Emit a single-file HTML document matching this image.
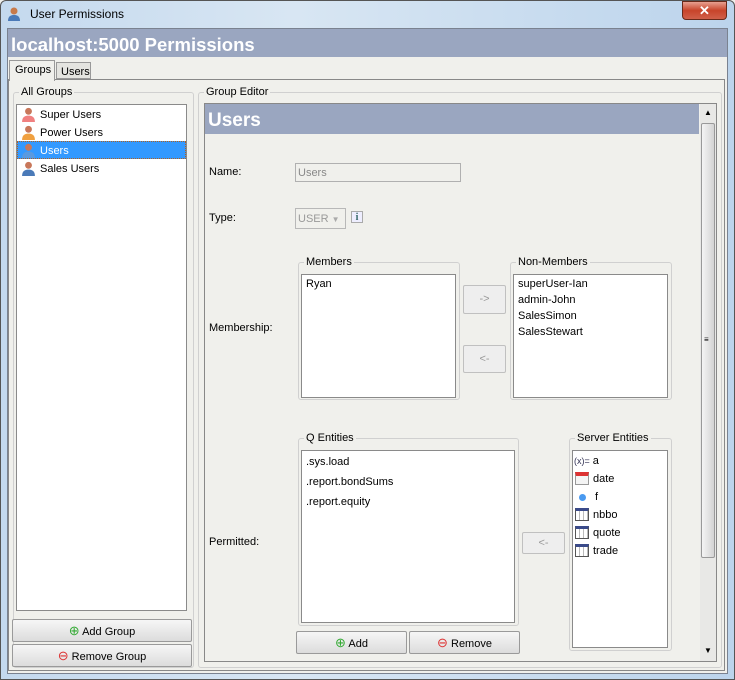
<!DOCTYPE html><html><head><style>
*{box-sizing:border-box;margin:0;padding:0}
body{width:735px;height:680px;overflow:hidden;font:11px "Liberation Sans",sans-serif;color:#000;background:#f0f0ec;position:relative}
.a{position:absolute}
.fs{position:absolute;border:1px solid #d0d0d0;border-radius:3px}
.lg{position:absolute;top:-7px;left:5px;background:#f0f0ec;padding:0 2px;font-size:11px;line-height:12px}
.lb{position:absolute;background:#fff;border:1px solid #8a8a8a}
.bt{position:absolute;border:1px solid #9a9a9a;border-radius:2px;background:linear-gradient(#f6f6f6,#dcdcdc);text-align:center;font-size:11px}
.dis{color:#999;border-color:#c0c0c0;background:#eee}
.it{position:absolute;left:4px;height:18px;line-height:18px}
.pi{display:inline-block;width:15px;height:15px;vertical-align:middle;margin-right:4px;position:relative;top:-1px}
.grd{display:inline-block;width:14px;height:13px;border:1px solid #555;border-top:3px solid #3a4a8a;background:repeating-linear-gradient(90deg,#fff 0 3px,#bbb 3px 4px),#fff;vertical-align:middle;margin-right:4px;position:relative;top:-1px}
</style></head><body>
<div class="a" style="left:0;top:0;width:735px;height:680px;border:1px solid #555;border-radius:6px 6px 0 0;background:linear-gradient(90deg,#c4d9ee,#d8e6f3 40%,#bcd4ec)"></div>
<div class="a" style="left:6px;top:6px;width:16px;height:16px"><svg width="16" height="16"><circle cx="8" cy="5" r="3.5" fill="#c77a4a"/><path d="M2 15c0-5 3-6 6-6s6 1 6 6z" fill="#4a7ab8"/></svg></div>
<div class="a" style="left:30px;top:7px;font-size:12px;color:#000">User Permissions</div>
<div class="a" style="left:682px;top:1px;width:45px;height:19px;border:1px solid #6a2a1a;border-radius:0 0 4px 4px;background:linear-gradient(#e8a090,#c8442a 50%,#d0604a);color:#fff;font-weight:bold;text-align:center;font-size:13px;line-height:17px">✕</div>
<div class="a" style="left:7px;top:28px;width:721px;height:646px;background:#f0f0ec;border:1px solid #7a8290"></div>
<div class="a" style="left:8px;top:29px;width:719px;height:28px;background:#9aa6c0;color:#fff;font-weight:bold;font-size:18.5px;line-height:31px;padding-left:3px">localhost:5000 Permissions</div>
<div class="a" style="left:8px;top:79px;width:717px;height:592px;border:1px solid #888"></div>
<div class="a" style="left:9px;top:60px;width:46px;height:21px;border:1px solid #999;border-bottom:none;background:#f0f0ec;padding:3px 0 0 5px;font-size:11px">Groups</div>
<div class="a" style="left:56px;top:62px;width:35px;height:17px;border:1px solid #999;background:#e4e4e0;padding:3px 0 0 4px">Users</div>

<div class="fs" style="left:13px;top:92px;width:181px;height:576px"><span class="lg">All Groups</span></div>
<div class="lb" style="left:16px;top:104px;width:171px;height:507px">
<div class="it" style="top:1px"><svg class="pi" viewBox="0 0 13 14"><circle cx="6.5" cy="4" r="3.2" fill="#c8775a"/><path d="M0.5 14c0-5 3-6 6-6S12.5 9 12.5 14z" fill="#f08080"/></svg>Super Users</div>
<div class="it" style="top:19px"><svg class="pi" viewBox="0 0 13 14"><circle cx="6.5" cy="4" r="3.2" fill="#c8775a"/><path d="M0.5 14c0-5 3-6 6-6S12.5 9 12.5 14z" fill="#f0a040"/></svg>Power Users</div>
<div class="a" style="left:0;top:36px;width:169px;height:18px;background:#3399ff;border:1px dotted #b06020"></div>
<div class="it" style="top:37px;color:#fff"><svg class="pi" viewBox="0 0 13 14"><circle cx="6.5" cy="4" r="3.2" fill="#c8775a"/><path d="M0.5 14c0-5 3-6 6-6S12.5 9 12.5 14z" fill="#5a9ae0"/></svg>Users</div>
<div class="it" style="top:55px"><svg class="pi" viewBox="0 0 13 14"><circle cx="6.5" cy="4" r="3.2" fill="#c8775a"/><path d="M0.5 14c0-5 3-6 6-6S12.5 9 12.5 14z" fill="#4a7ab8"/></svg>Sales Users</div>
</div>
<div class="bt" style="left:12px;top:619px;width:180px;height:23px;line-height:21px"><span style="color:#3a3;font-size:13px">⊕</span> Add Group</div>
<div class="bt" style="left:12px;top:644px;width:180px;height:23px;line-height:21px"><span style="color:#d33;font-size:13px">⊖</span> Remove Group</div>

<div class="fs" style="left:198px;top:92px;width:524px;height:576px"><span class="lg">Group Editor</span></div>
<div class="a" style="left:204px;top:103px;width:513px;height:559px;border:1px solid #888"></div>
<div class="a" style="left:205px;top:104px;width:494px;height:30px;background:#9aa6c0;color:#fff;font-weight:bold;font-size:19px;line-height:33px;padding-left:3px">Users</div>
<div class="a" style="left:700px;top:104px;width:16px;height:557px;background:#e8e8e6"></div>
<div class="a" style="left:701px;top:123px;width:14px;height:435px;border:1px solid #999;border-radius:2px;background:linear-gradient(90deg,#f4f4f4,#d4d4d4)"></div>
<div class="a" style="left:704px;top:108px;font-size:8px">▲</div>
<div class="a" style="left:704px;top:646px;font-size:8px">▼</div>
<div class="a" style="left:704px;top:335px;font-size:8px">≡</div>

<div class="a" style="left:209px;top:166px">Name:</div>
<div class="a" style="left:295px;top:163px;width:166px;height:19px;border:1px solid #b0b0b0;color:#888;padding:3px 2px">Users</div>
<div class="a" style="left:209px;top:212px">Type:</div>
<div class="a" style="left:295px;top:208px;width:51px;height:21px;border:1px solid #b8b8b8;color:#999;padding:4px 2px">USER <span style="font-size:8px;color:#aaa">▼</span></div>
<div class="a" style="left:351px;top:211px;width:12px;height:12px;border:1px solid #aaa;background:#eef;color:#366;font-weight:bold;font-size:10px;text-align:center;line-height:11px;font-family:'Liberation Serif',serif">i</div>
<div class="a" style="left:209px;top:322px">Membership:</div>
<div class="fs" style="left:298px;top:262px;width:162px;height:138px"><span class="lg">Members</span></div>
<div class="lb" style="left:301px;top:274px;width:155px;height:124px"><div class="it" style="top:0">Ryan</div></div>
<div class="bt dis" style="left:463px;top:285px;width:43px;height:29px;line-height:27px">-&gt;</div>
<div class="bt dis" style="left:463px;top:345px;width:43px;height:28px;line-height:26px">&lt;-</div>
<div class="fs" style="left:510px;top:262px;width:162px;height:138px"><span class="lg">Non-Members</span></div>
<div class="lb" style="left:513px;top:274px;width:155px;height:124px">
<div class="it" style="top:0">superUser-Ian</div><div class="it" style="top:16px">admin-John</div><div class="it" style="top:32px">SalesSimon</div><div class="it" style="top:48px">SalesStewart</div></div>

<div class="a" style="left:209px;top:536px">Permitted:</div>
<div class="fs" style="left:298px;top:438px;width:221px;height:188px"><span class="lg">Q Entities</span></div>
<div class="lb" style="left:301px;top:450px;width:214px;height:173px">
<div class="it" style="top:2px">.sys.load</div><div class="it" style="top:22px">.report.bondSums</div><div class="it" style="top:42px">.report.equity</div></div>
<div class="bt" style="left:296px;top:631px;width:111px;height:23px;line-height:21px"><span style="color:#3a3;font-size:13px">⊕</span> Add</div>
<div class="bt" style="left:409px;top:631px;width:111px;height:23px;line-height:21px"><span style="color:#d33;font-size:13px">⊖</span> Remove</div>
<div class="bt dis" style="left:522px;top:532px;width:43px;height:22px;line-height:20px">&lt;-</div>
<div class="fs" style="left:569px;top:438px;width:103px;height:213px"><span class="lg">Server Entities</span></div>
<div class="lb" style="left:572px;top:450px;width:96px;height:198px">
<div class="it" style="top:1px;left:1px"><span style="font-size:9px;color:#335">(x)=</span> a</div>
<div class="it" style="top:19px;left:2px"><span style="display:inline-block;width:14px;height:13px;border:1px solid #999;border-top:4px solid #d33;background:#f4f4f4;vertical-align:middle;margin-right:4px;position:relative;top:-1px"></span>date</div>
<div class="it" style="top:37px;left:2px"><span style="display:inline-block;width:7px;height:7px;border-radius:50%;background:#4a9af0;margin:0 9px 0 4px;vertical-align:middle"></span>f</div>
<div class="it" style="top:55px;left:2px"><span class="grd"></span>nbbo</div>
<div class="it" style="top:73px;left:2px"><span class="grd"></span>quote</div>
<div class="it" style="top:91px;left:2px"><span class="grd"></span>trade</div>
</div>
</body></html>
